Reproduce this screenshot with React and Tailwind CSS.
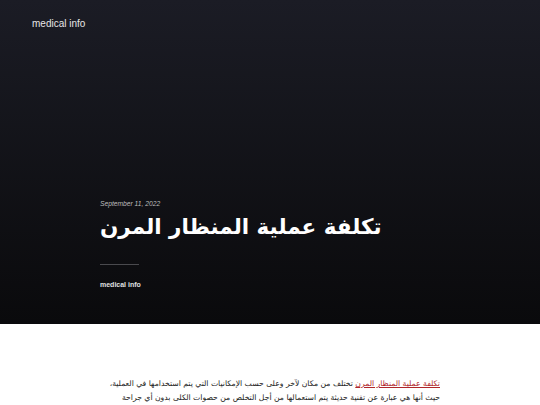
import React from 'react';

const App = () => {
  return (
    <div className="min-h-[405px] bg-white font-['Liberation_Sans','DejaVu_Sans',sans-serif]">
      <header className="h-[324px] bg-gradient-to-b from-[#1b1c25] to-[#0a0a0c] flex flex-col">
        <div className="px-8 pt-[17px] text-[10px] leading-[13px] text-[#e6e6e6]">medical info</div>
        <div className="mt-[169px] px-[100px]">
          <p className="text-[6.7px] leading-[9px] italic text-[#bdbdbd]">September 11, 2022</p>
          <h1 dir="rtl" className="mt-[4px] w-fit whitespace-nowrap text-[21.5px] leading-[30px] font-bold text-white font-['DejaVu_Sans',sans-serif]">
            تكلفة عملية المنظار المرن
          </h1>
          <div className="mt-[22px] w-[39px] h-px bg-[#4a4a4e]" />
          <p className="mt-[15px] text-[7px] leading-[9px] font-bold text-[#e0e0e0]">medical info</p>
        </div>
      </header>
      <main className="px-[100px] pt-[53px]">
        <p dir="rtl" className="text-[7.7px] leading-[14px] text-[#222] font-['DejaVu_Sans',sans-serif]">
          <a href="#" className="text-[#b0262a] underline">تكلفة عملية المنظار المرن</a> تختلف من مكان لآخر وعلى حسب الإمكانيات التي يتم استخدامها في العملية، حيث أنها هي عبارة عن تقنية حديثة يتم استعمالها من أجل التخلص من حصوات الكلى بدون أي جراحة
        </p>
      </main>
    </div>
  );
};

export default App;
